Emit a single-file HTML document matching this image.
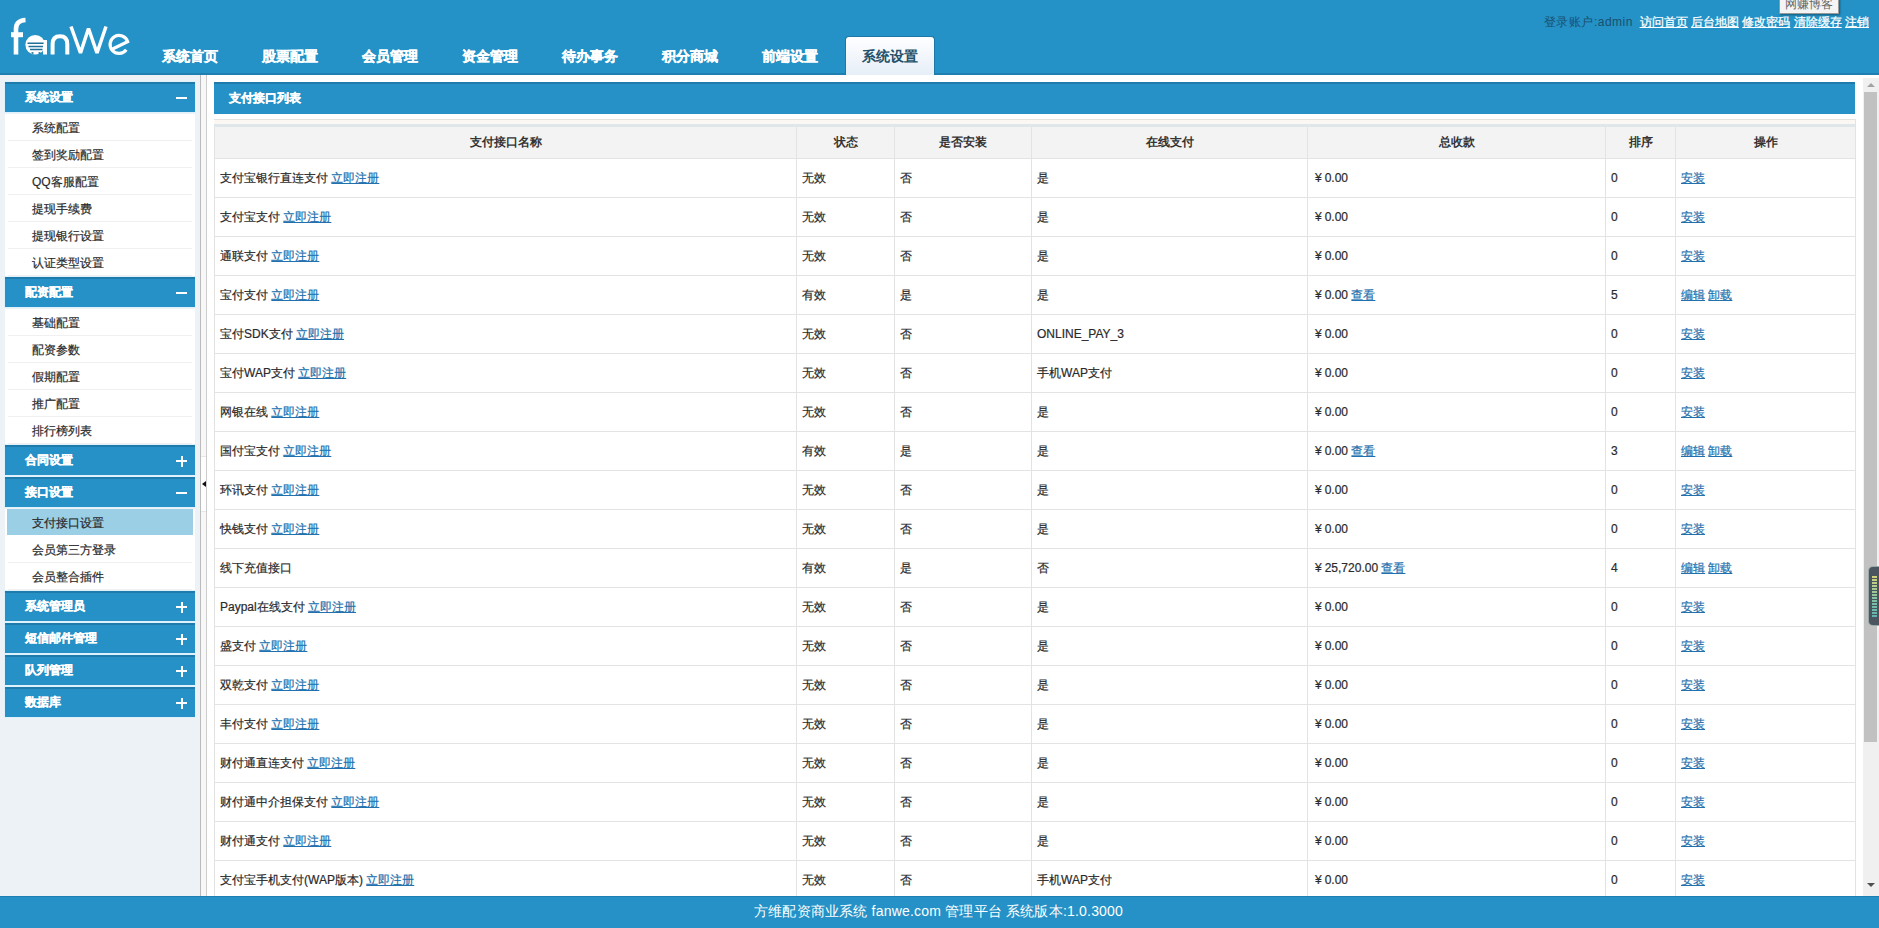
<!DOCTYPE html>
<html><head><meta charset="utf-8">
<style>
*{margin:0;padding:0;box-sizing:border-box}
html,body{width:1879px;height:928px;overflow:hidden;background:#fff;font-family:"Liberation Sans",sans-serif;font-size:12px;color:#333}
.abs{position:absolute}
#hd{position:absolute;left:0;top:0;width:1879px;height:75px;background:#2492c6;border-bottom:2px solid #1f7fb0}
#nav a{position:absolute;top:48px;font-size:14px;font-weight:bold;color:#fff;text-decoration:none;line-height:16px;width:56px;white-space:nowrap}
#tab{position:absolute;left:845px;top:36px;width:90px;height:39px;background:linear-gradient(#fff,#e6eef8);border-radius:4px 4px 0 0;border:1px solid #1c78a8;border-bottom:0}
#tr{position:absolute;right:10px;top:15px;font-size:12px;line-height:14px;white-space:nowrap;color:#18506f}
#tr a{color:#fff;text-decoration:underline;-webkit-text-stroke:.25px #fff}
#tip{position:absolute;left:1779px;top:-2px;width:60px;height:16px;background:#f4f4f4;border:1px solid #999;color:#666;font-size:12px;line-height:11px;text-align:center;box-shadow:1px 1px 2px rgba(0,0,0,.4)}
#side{position:absolute;left:0;top:75px;width:201px;height:821px;background:#edf2f7;border-right:1px solid #bbb}
#split{position:absolute;left:201px;top:75px;width:6px;height:821px;background:#f7f7f7;border-right:1px solid #ccc}
.sh{position:absolute;left:5px;width:190px;height:30px;background:#2591c6;border-top:2px solid #1f7bab;color:#fff;font-weight:bold;font-size:12px;line-height:27px;padding-left:20px;box-shadow:0 0 0 1px #dff1fb}
.sh b{position:absolute;right:8px;top:13px;width:11px;height:2px;background:#fff}
.sh b.p:after{content:"";position:absolute;left:4.5px;top:-4.5px;width:2px;height:11px;background:#fff}
.sh,#nav a,#title{-webkit-text-stroke:.3px currentColor}
.sl{position:absolute;left:5px;width:190px;background:#fff}
.sl div{height:27px;line-height:23px;padding-top:3px;padding-left:24px;border-bottom:1px solid #f0f0f0;margin-left:3px;margin-right:3px;color:#2a2a2a;-webkit-text-stroke:.2px currentColor;white-space:nowrap}
.sl div.on{background:#9bcfe6;margin-left:2px;margin-right:2px;padding-left:25px;border-bottom-color:#fff}
#title{position:absolute;left:214px;top:82px;width:1641px;height:32px;background:#2591c6;border-top:2px solid #1f7bab;color:#fff;font-weight:bold;line-height:29px;padding-left:15px}
#tbl{position:absolute;left:214px;top:119px;width:1641px;border-collapse:collapse;table-layout:fixed}
#tbl th{height:39px;background:#f3f3f3;font-weight:bold;color:#333;border:1px solid #e3e3e3;border-top-color:#e2e2e2;text-align:center;font-size:12px;padding-top:7px}
#tstrip{position:absolute;left:214px;top:120px;width:1641px;height:7px;background:linear-gradient(#fbf8f4 0 4px,#dfe7eb 4px 7px)}
#tbl td{height:39px;border:1px solid #e3e3e3;padding-left:5px;color:#2a2a2a;-webkit-text-stroke:.2px currentColor;white-space:nowrap;font-size:12px}
#tbl a{color:#2271ae;text-decoration:underline}
#ft{position:absolute;left:0;top:896px;width:1879px;height:32px;background:#2591c6;border-top:1px solid #1f80b3;color:#fff;font-size:14px;line-height:29px;text-align:center;letter-spacing:.2px;padding-right:2px}
#sb{position:absolute;left:1863px;top:78px;width:16px;height:818px;background:#f0f0f0}
.y{font-style:normal;margin-left:2px;margin-right:3px}
</style></head><body>
<div style="position:absolute;left:0;top:75px;width:1879px;height:2px;background:#fff"></div>
<div id="hd"></div>
<svg class="abs" style="left:0;top:0" width="140" height="70" viewBox="0 0 140 70">
<g fill="none" stroke="#fff" stroke-linecap="butt">
<path d="M16 54.5 V29 Q16 20.5 25.5 20" stroke-width="4.6"/>
<path d="M11 34.7 H23" stroke-width="5"/>
<path d="M52.6 54.5 V44 Q52.6 36.2 60 36.2 Q67.3 36.2 67.3 44 V54.5" stroke-width="4"/>
<path d="M71 26.5 L80.5 53 L88.5 28.5 L97 53 L106 26.5" stroke-width="3.5" stroke-linejoin="bevel"/>
<path d="M111.5 49.5 L127.6 41.6 A9 9 0 1 0 126.3 49.8" stroke-width="3.2"/>
</g>
<circle cx="35.2" cy="44.7" r="9.8" fill="#fff"/>
<rect x="43" y="40" width="4" height="14.5" fill="#fff"/>
<g stroke="#1f6f99" stroke-width="1.5"><path d="M27.5 43.3 H43.6 M28.5 46.4 H43 M30 49.5 H42.5"/></g>
<g fill="#1f6f99"><rect x="31.5" y="52.2" width="2" height="1.6"/><rect x="38.5" y="52.2" width="2" height="1.6"/></g>
</svg>
<div id="nav">
<div id="tab"></div>
<a style="left:162px">系统首页</a>
<a style="left:262px">股票配置</a>
<a style="left:362px">会员管理</a>
<a style="left:462px">资金管理</a>
<a style="left:562px">待办事务</a>
<a style="left:662px">积分商城</a>
<a style="left:762px">前端设置</a>
<a style="left:862px;color:#23506a;-webkit-text-stroke:0">系统设置</a>
</div>
<div id="tr"><span style="letter-spacing:.5px">登录账户:admin</span> &nbsp;<a>访问首页</a> <a>后台地图</a> <a>修改密码</a> <a>清除缓存</a> <a>注销</a></div>
<div id="tip">网赚博客</div>

<div id="side"></div>
<div id="split"></div>

<div class="sh" style="top:82px">系统设置<b></b></div>
<div class="sl" style="top:114px;height:163px">
<div>系统配置</div><div>签到奖励配置</div><div>QQ客服配置</div><div>提现手续费</div><div>提现银行设置</div><div>认证类型设置</div>
</div>
<div class="sh" style="top:277px">配资配置<b></b></div>
<div class="sl" style="top:309px;height:136px">
<div>基础配置</div><div>配资参数</div><div>假期配置</div><div>推广配置</div><div>排行榜列表</div>
</div>
<div class="sh" style="top:445px">合同设置<b class="p"></b></div>
<div class="sh" style="top:477px">接口设置<b></b></div>
<div class="sl" style="top:509px;height:82px">
<div class="on">支付接口设置</div><div>会员第三方登录</div><div>会员整合插件</div>
</div>
<div class="sh" style="top:591px">系统管理员<b class="p"></b></div>
<div class="sh" style="top:623px">短信邮件管理<b class="p"></b></div>
<div class="sh" style="top:655px">队列管理<b class="p"></b></div>
<div class="sh" style="top:687px">数据库<b class="p"></b></div>

<div id="title">支付接口列表</div>

<table id="tbl">
<colgroup><col style="width:582px"><col style="width:98px"><col style="width:137px"><col style="width:276px"><col style="width:298px"><col style="width:70px"><col style="width:180px"></colgroup>
<tr><th>支付接口名称</th><th>状态</th><th>是否安装</th><th>在线支付</th><th>总收款</th><th>排序</th><th>操作</th></tr>
<tr><td>支付宝银行直连支付 <a>立即注册</a></td><td>无效</td><td>否</td><td>是</td><td><i class="y">¥</i>0.00</td><td>0</td><td><a>安装</a></td></tr>
<tr><td>支付宝支付 <a>立即注册</a></td><td>无效</td><td>否</td><td>是</td><td><i class="y">¥</i>0.00</td><td>0</td><td><a>安装</a></td></tr>
<tr><td>通联支付 <a>立即注册</a></td><td>无效</td><td>否</td><td>是</td><td><i class="y">¥</i>0.00</td><td>0</td><td><a>安装</a></td></tr>
<tr><td>宝付支付 <a>立即注册</a></td><td>有效</td><td>是</td><td>是</td><td><i class="y">¥</i>0.00 <a>查看</a></td><td>5</td><td><a>编辑</a> <a>卸载</a></td></tr>
<tr><td>宝付SDK支付 <a>立即注册</a></td><td>无效</td><td>否</td><td>ONLINE_PAY_3</td><td><i class="y">¥</i>0.00</td><td>0</td><td><a>安装</a></td></tr>
<tr><td>宝付WAP支付 <a>立即注册</a></td><td>无效</td><td>否</td><td>手机WAP支付</td><td><i class="y">¥</i>0.00</td><td>0</td><td><a>安装</a></td></tr>
<tr><td>网银在线 <a>立即注册</a></td><td>无效</td><td>否</td><td>是</td><td><i class="y">¥</i>0.00</td><td>0</td><td><a>安装</a></td></tr>
<tr><td>国付宝支付 <a>立即注册</a></td><td>有效</td><td>是</td><td>是</td><td><i class="y">¥</i>0.00 <a>查看</a></td><td>3</td><td><a>编辑</a> <a>卸载</a></td></tr>
<tr><td>环讯支付 <a>立即注册</a></td><td>无效</td><td>否</td><td>是</td><td><i class="y">¥</i>0.00</td><td>0</td><td><a>安装</a></td></tr>
<tr><td>快钱支付 <a>立即注册</a></td><td>无效</td><td>否</td><td>是</td><td><i class="y">¥</i>0.00</td><td>0</td><td><a>安装</a></td></tr>
<tr><td>线下充值接口</td><td>有效</td><td>是</td><td>否</td><td><i class="y">¥</i>25,720.00 <a>查看</a></td><td>4</td><td><a>编辑</a> <a>卸载</a></td></tr>
<tr><td>Paypal在线支付 <a>立即注册</a></td><td>无效</td><td>否</td><td>是</td><td><i class="y">¥</i>0.00</td><td>0</td><td><a>安装</a></td></tr>
<tr><td>盛支付 <a>立即注册</a></td><td>无效</td><td>否</td><td>是</td><td><i class="y">¥</i>0.00</td><td>0</td><td><a>安装</a></td></tr>
<tr><td>双乾支付 <a>立即注册</a></td><td>无效</td><td>否</td><td>是</td><td><i class="y">¥</i>0.00</td><td>0</td><td><a>安装</a></td></tr>
<tr><td>丰付支付 <a>立即注册</a></td><td>无效</td><td>否</td><td>是</td><td><i class="y">¥</i>0.00</td><td>0</td><td><a>安装</a></td></tr>
<tr><td>财付通直连支付 <a>立即注册</a></td><td>无效</td><td>否</td><td>是</td><td><i class="y">¥</i>0.00</td><td>0</td><td><a>安装</a></td></tr>
<tr><td>财付通中介担保支付 <a>立即注册</a></td><td>无效</td><td>否</td><td>是</td><td><i class="y">¥</i>0.00</td><td>0</td><td><a>安装</a></td></tr>
<tr><td>财付通支付 <a>立即注册</a></td><td>无效</td><td>否</td><td>是</td><td><i class="y">¥</i>0.00</td><td>0</td><td><a>安装</a></td></tr>
<tr><td>支付宝手机支付(WAP版本) <a>立即注册</a></td><td>无效</td><td>否</td><td>手机WAP支付</td><td><i class="y">¥</i>0.00</td><td>0</td><td><a>安装</a></td></tr>
</table>

<div id="tstrip"></div>
<div id="sb"><div style="position:absolute;left:4px;top:5px;width:0;height:0;border-left:4px solid transparent;border-right:4px solid transparent;border-bottom:4px solid #a3a3a3"></div>
<div style="position:absolute;left:1px;top:14px;width:13px;height:650px;background:#c1c1c1"></div>
<div style="position:absolute;left:4px;top:805px;width:0;height:0;border-left:4px solid transparent;border-right:4px solid transparent;border-top:4px solid #505050"></div>
<div style="position:absolute;left:6px;top:489px;width:14px;height:58px;border-radius:4px;background:#4a5560;box-shadow:0 0 0 1px #9aa"><div style="position:absolute;left:3px;top:8px;width:5px;height:42px;background:repeating-linear-gradient(#4a5560 0 1px,transparent 1px 3px),linear-gradient(#d9d27a,#7fc3a3 60%,#5fb3b0)"></div></div>
</div>
<div style="position:absolute;left:201px;top:456px;width:5px;height:56px;background:#fdfdfd;border-top:1px solid #e6e6e6;border-bottom:1px solid #e6e6e6"></div>
<div style="position:absolute;left:202px;top:481px;width:0;height:0;border-top:3.5px solid transparent;border-bottom:3.5px solid transparent;border-right:4px solid #111"></div>
<div id="ft">方维配资商业系统 fanwe.com 管理平台 系统版本:1.0.3000</div>
</body></html>
